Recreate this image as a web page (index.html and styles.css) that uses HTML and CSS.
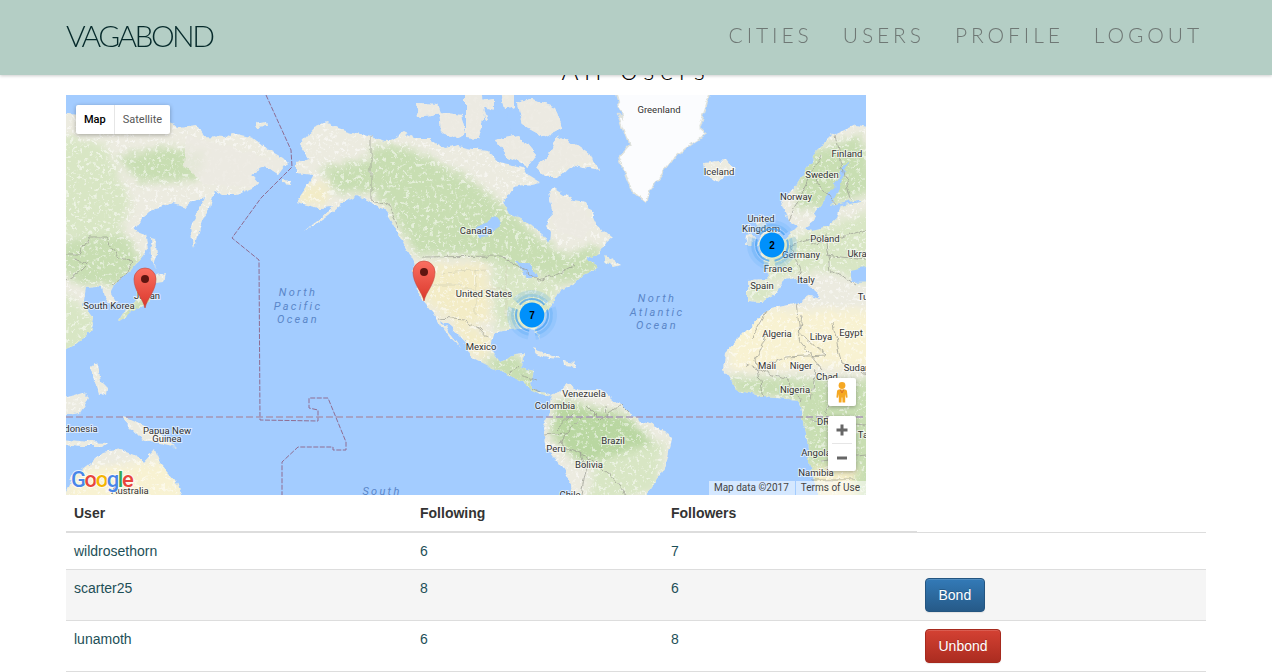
FILE: index.html
```html
<!DOCTYPE html>
<html lang="en">
<head>
<meta charset="utf-8">
<title>Vagabond</title>
<link rel="stylesheet" href="styles.css">
</head>
<body>
<header class="navbar">
  <a class="brand">VAGABOND</a>
  <nav class="nav">
    <a>CITIES</a><a>USERS</a><a>PROFILE</a><a>LOGOUT</a>
  </nav>
</header>
<main class="container">
  <h1 class="title">All Users</h1>
  <div class="map">
    <svg class="map-svg" viewBox="0 0 800 400" width="800" height="400" xmlns="http://www.w3.org/2000/svg">
      <defs>
        <path id="land" d="
        M-10,18 L40,22 103,28 113,32 130,30 138,42 160,43 167,38 187,43 203,55 217,63 222,68 213,80 203,73 197,72 185,80 192,88 187,93 170,100 157,100 148,95 142,100 128,105 120,112 107,108 90,113 78,122 68,135 80,140 83,152 75,163 65,175 57,182 48,190 44,198 50,208 45,211 39,203 37,193 30,192 20,193 17,210 27,223 24,236 14,247 -10,257 Z
        M140,100 L147,93 148,100 145,113 137,123 132,140 128,152 125,133 128,123 Z
        M85,142 L89,143 91,160 88,172 86,160 Z
        M52,227 L66,217 77,212 84,205 87,190 82,186 76,198 66,210 54,220 Z
        M90,180 L100,178 98,186 91,187 Z
        M190,28 L200,26 201,31 191,32 Z M217,85 L224,86 223,89 217,88 Z
        M24,272 L30,268 34,285 41,292 40,300 33,297 28,285 Z
        M-10,305 L8,300 17,297 23,303 14,318 2,320 -10,320 Z
        M56,323 L66,325 82,332 104,347 110,352 94,348 81,347 74,342 64,332 Z
        M-10,343 L20,347 42,348 38,351 15,351 -10,348 Z
        M6,382 L24,368 37,358 56,355 69,360 77,368 89,355 94,368 109,385 119,410 -5,410 Z
        M233,50 L248,33 260,28 280,35 305,42 320,47 337,38 347,43 363,43 377,53 393,50 400,52 420,55 433,67 457,72 462,80 475,88 447,93 437,107 443,118 463,128 478,140 482,148 483,137 480,132 487,120 483,97 488,93 507,105 520,107 530,128 547,143 535,153 520,163 533,172 517,180 507,190 494,195 487,208 481,215 471,232 474,245 469,235 462,233 444,235 431,237 427,240 424,253 434,267 441,265 449,259 459,258 454,272 467,276 464,288 474,297 481,298 487,300 481,302 467,295 457,287 444,280 431,275 417,268 407,263 401,250 385,232 376,225 377,228 396,253 386,243 377,232 372,224 357,205 349,185 347,165 333,140 320,117 303,107 290,100 277,107 263,120 237,137 267,112 253,113 230,107 240,93 247,80 230,78 230,68 242,63 Z
        M350,8 L372,9 375,18 352,22 Z M373,17 L395,20 400,38 385,44 375,35 Z
        M400,-10 L415,-10 418,25 412,45 400,44 Z M415,5 L428,3 428,22 420,28 Z M433,-10 L448,-10 448,12 438,15 Z
        M451,8 L466,4 490,12 497,32 478,42 456,30 Z
        M430,45 L453,40 470,60 462,72 440,62 Z
        M470,72 L482,62 492,40 510,50 527,62 532,76 505,70 492,82 480,82 Z
        M520,150 L530,148 534,160 525,162 Z
        M538,160 L555,170 547,172 540,168 Z
        M467,254 L480,258 494,265 484,264 470,259 Z M497,266 L510,268 508,271 498,270 Z
        M487,300 L501,288 514,295 537,295 562,317 571,323 587,330 604,340 606,345 600,370 584,395 574,410 511,410 507,390 494,370 479,350 477,333 481,323 Z
        M638,68 L660,65 668,75 653,87 640,80 Z
        M715,107 L733,87 750,57 767,40 790,30 810,33 810,222 794,222 767,228 737,222 731,208 745,200 754,203 748,195 734,182 717,185 711,198 694,208 681,207 681,185 703,184 700,172 692,160 702,153 718,146 726,138 732,132 722,125 Z
        M690,128 L697,122 702,135 707,148 690,152 695,142 Z
        M680,140 L688,138 687,150 679,150 Z
        M681,235 L701,215 731,208 737,222 767,228 794,222 810,222 810,410 754,410 751,395 744,372 741,345 737,322 734,305 697,302 671,295 657,275 659,258 Z" />
        <clipPath id="land-clip"><use href="#land"/></clipPath>
        <filter id="soft" x="-20%" y="-20%" width="140%" height="140%"><feGaussianBlur stdDeviation="4"/></filter>
        <filter id="rough" filterUnits="userSpaceOnUse" x="-20" y="-20" width="840" height="440">
          <feTurbulence type="fractalNoise" baseFrequency="0.1" numOctaves="3" seed="4" result="n"/>
          <feDisplacementMap in="SourceGraphic" in2="n" scale="7" xChannelSelector="R" yChannelSelector="G"/>
          <feGaussianBlur stdDeviation="0.4"/>
        </filter>
        <filter id="speckle" filterUnits="userSpaceOnUse" x="0" y="0" width="800" height="400">
          <feTurbulence type="fractalNoise" baseFrequency="0.28" numOctaves="3" seed="11"/>
          <feColorMatrix type="matrix" values="0 0 0 0 1  0 0 0 0 1  0 0 0 0 1  0 0 0 7 -3.9"/>
          <feGaussianBlur stdDeviation="0.5"/>
        </filter>
        <linearGradient id="pin-fill" x1="0" y1="0" x2="0" y2="1">
          <stop offset="0" stop-color="#fa6f61"/><stop offset="1" stop-color="#da382c"/>
        </linearGradient>
        <g id="pin">
          <path class="pin-body" d="M0,29 C-1.8,20 -11,12 -11,0 A11,11 0 1 1 11,0 C11,12 1.8,20 0,29 Z"/>
          <circle class="pin-dot" r="4"/>
        </g>
        <g id="cluster">
          <circle class="arc arc3" r="23" pathLength="100" transform="rotate(100)"/>
          <circle class="arc arc2" r="19.5" pathLength="100" transform="rotate(100)"/>
          <circle class="arc arc1" r="16" pathLength="100" transform="rotate(100)"/>
          <circle class="cluster-ring" r="13"/>
          <circle class="cluster-core" r="12.4"/>
        </g>
      </defs>

      <rect class="water" width="800" height="400"/>
      <g filter="url(#rough)">
        <use href="#land" class="land"/>
        <g clip-path="url(#land-clip)">
          <g filter="url(#soft)">
            <path class="g-mid" d="M305,50 L340,52 400,82 440,112 470,140 500,160 530,150 540,175 500,190 470,178 400,160 350,160 320,110 300,90 Z"/>
            <path class="g-mid" d="M255,72 L305,65 305,98 270,98 Z"/>
            <path class="g-mid" d="M50,62 L100,52 140,58 130,85 75,88 Z"/>
            <path class="g-pale" d="M-10,40 L40,50 65,110 50,145 -10,140 Z"/>
            <path class="g-mid" d="M-5,145 L60,140 75,165 55,190 15,190 -5,175 Z"/>
            <path class="g-pale" d="M-5,195 L30,225 25,260 -10,260 Z"/>
            <path class="g-pale" d="M425,165 L495,190 480,230 430,235 Z"/>
            <path class="g-sand" d="M350,170 L420,168 425,225 395,232 360,205 Z"/>
            <path class="g-sand" d="M232,92 L262,88 262,108 235,108 Z"/>
            <path class="g-sand" d="M385,228 L425,240 420,265 405,258 Z"/>
            <path class="g-mid" d="M415,265 L450,258 470,280 485,300 460,295 430,280 Z"/>
            <path class="g-deep" d="M490,305 L560,320 590,350 560,375 510,365 485,340 Z"/>
            <path class="g-pale" d="M530,365 L600,345 590,395 520,412 Z"/>
            <path class="g-mid" d="M735,60 L795,40 810,95 770,110 730,115 Z"/>
            <path class="g-pale" d="M700,150 L810,115 810,190 760,175 700,185 Z"/>
            <path class="g-pale" d="M680,190 L715,190 700,208 682,208 Z"/>
            <path class="g-sand2" d="M660,215 L810,215 810,272 750,272 665,275 Z"/>
            <path class="g-mid" d="M660,282 L810,285 810,410 745,410 730,305 670,298 Z"/>
            <path class="g-sand" d="M745,372 L790,372 790,410 752,410 Z"/>
            <path class="g-sand2" d="M10,375 L100,365 125,410 -5,410 Z"/>
            <path class="g-mid" d="M50,225 L90,185 95,205 60,235 Z"/>
          </g>
          <rect class="ice" x="0" y="0" width="800" height="400" filter="url(#speckle)"/>
          <path class="arctic" d="M340,0 L545,0 530,62 480,78 420,52 400,50 340,38 Z"/>
          <path class="arctic" d="M483,97 L507,105 530,128 515,145 490,135 Z"/>
          <path class="arctic" d="M120,40 L222,68 190,92 140,90 118,70 Z"/>
        </g>
        <path class="greenland" d="M547,-10 L557,23 552,20 563,50 553,62 567,97 580,107 587,90 607,63 640,38 633,32 647,-10 Z"/>
        <path class="water-shape" d="M738,133 L746,127 750,116 757,106 764,96 773,82 778,72 783,66 782,72 775,86 770,100 766,111 794,104 795,106 775,111 771,123 762,131 746,135 Z"/>
        <path class="water-shape" d="M783,175 L810,170 810,186 785,187 Z"/>
        <path class="water-shape" d="M418,12 L440,18 445,40 425,38 Z"/>
        <path class="water-shape" d="M408,135 L430,120 436,128 416,143 Z"/>
        <path class="water-shape" d="M450,165 L465,170 472,183 460,183 Z"/>
        <path class="water-shape" d="M735,186 L752,198 745,200 735,192 Z"/>
        <g class="border">
          <path d="M357,162 L435,161 450,170 472,185 490,180 508,170"/>
          <path d="M305,42 L305,105 320,108 333,133"/>
          <path d="M374,223 L397,225 414,235 423,245"/>
          <path d="M0,160 L13,160 23,143 40,143 53,163 65,165 60,180 45,190"/>
          <path d="M0,185 L15,175 22,168 10,165"/>
          <path d="M697,302 L690,265 700,240 M701,215 L685,243 M731,208 L735,240 760,260 720,262 700,270 M737,222 L733,245 757,275 M767,228 L775,268 790,272 800,280 M750,275 L745,305 M770,285 L760,320 M680,270 L720,285 735,305 M745,325 L800,330 M755,365 L800,360 M745,385 L790,385"/>
          <path d="M722,125 L755,60 M750,85 L770,110 M770,40 L775,65 785,105 M725,150 L760,140 765,175 M745,150 L800,135 M760,160 L800,165 M725,150 L735,180 M765,175 L790,190"/>
          <path d="M490,335 L508,318 M520,310 L535,325 555,310 562,317 M478,340 L500,338 495,350 515,358 520,375 515,400 M500,338 L515,322 M515,358 L545,380 560,400 M540,312 L542,325"/>
          <path d="M455,280 L470,285 M444,279 L452,270 M466,292 L475,296"/>
        </g>
        <g class="border-faint">
          <path d="M375,178 L420,175 M395,195 L440,195 M410,175 L410,220 M440,170 L440,225 M360,190 L395,190"/>
        </g>
      </g>
      <path class="dateline" d="M200,0 L225,55 226,72 195,103 166,143 193,165 194,325 252,326 252,315 243,313 243,303 262,303 280,347 280,355 267,355 267,352 232,352 216,367 216,400"/>
      <path class="equator" d="M0,322 L800,322"/>

      <g class="labels">
        <text x="593" y="18">Greenland</text><text x="653" y="80">Iceland</text>
        <text x="781" y="62">Finland</text><text x="756" y="83">Sweden</text><text x="730" y="105">Norway</text>
        <text x="695" y="127">United</text><text x="695" y="137">Kingdom</text>
        <text x="759" y="147">Poland</text><text x="791" y="162">Ukra</text>
        <text x="735" y="163">Germany</text><text x="712" y="177">France</text>
        <text x="696" y="194">Spain</text><text x="740" y="188">Italy</text><text x="797" y="205">Tu</text>
        <text x="711" y="242">Algeria</text><text x="755" y="245">Libya</text><text x="785" y="241">Egypt</text>
        <text x="701" y="274">Mali</text><text x="735" y="274">Niger</text><text x="761" y="285">Chad</text>
        <text x="791" y="276">Sudan</text><text x="729" y="298">Nigeria</text><text x="757" y="330">DR</text>
        <text x="797" y="343">Ta</text><text x="750" y="361">Angola</text><text x="750" y="381">Namibia</text>
        <text x="410" y="139">Canada</text><text x="418" y="202">United States</text><text x="415" y="255">Mexico</text>
        <text x="518" y="302">Venezuela</text><text x="489" y="314">Colombia</text><text x="547" y="349">Brazil</text>
        <text x="490" y="357">Peru</text><text x="523" y="373">Bolivia</text><text x="504" y="403">Chile</text>
        <text x="81" y="204">Japan</text><text x="43" y="214">South Korea</text><text x="15" y="337">donesia</text>
        <text x="101" y="339">Papua New</text><text x="101" y="347">Guinea</text><text x="64" y="399">Australia</text>
      </g>
      <g class="ocean">
        <text x="232" y="201">North</text><text x="232" y="215">Pacific</text><text x="232" y="228">Ocean</text>
        <text x="591" y="207">North</text><text x="591" y="221">Atlantic</text><text x="591" y="234">Ocean</text>
        <text x="316" y="400">South</text>
      </g>

      <use href="#pin" x="79" y="184"/>
      <use href="#pin" x="358" y="177"/>
      <use href="#cluster" x="466" y="220"/>
      <text class="cluster-num" x="466" y="223.5">7</text>
      <use href="#cluster" x="706" y="150"/>
      <text class="cluster-num" x="706" y="153.5">2</text>

      <text class="google" x="5" y="392"><tspan class="g-b">G</tspan><tspan class="g-r">o</tspan><tspan class="g-y">o</tspan><tspan class="g-b">g</tspan><tspan class="g-g">l</tspan><tspan class="g-r">e</tspan></text>
    </svg>

    <div class="map-type">
      <span class="map-type-btn is-active">Map</span>
      <span class="map-type-btn">Satellite</span>
    </div>
    <div class="pegman">
      <svg width="28" height="28" viewBox="0 0 28 28" xmlns="http://www.w3.org/2000/svg">
        <circle class="peg" cx="14" cy="7.5" r="3.4"/>
        <path class="peg" d="M11,11.5 L17,11.5 C18.2,11.5 18.8,12.4 19,13.5 L19.6,19.5 L18,19.8 L17.2,16 L17.2,24.5 L14.5,24.5 L14.3,19.5 L13.7,19.5 L13.5,24.5 L10.8,24.5 L10.8,16 L10,19.8 L8.4,19.5 L9,13.5 C9.2,12.4 9.8,11.5 11,11.5 Z"/>
        <path class="peg-mark" d="M12.2,11.5 L14,15 L15.8,11.5"/>
      </svg>
    </div>
    <div class="zoom">
      <span class="zoom-btn">
        <svg width="14" height="14" viewBox="0 0 14 14" xmlns="http://www.w3.org/2000/svg"><path class="zoom-glyph" d="M5.5,1.5 H8.5 V5.5 H12.5 V8.5 H8.5 V12.5 H5.5 V8.5 H1.5 V5.5 H5.5 Z"/></svg>
      </span>
      <span class="zoom-sep"></span>
      <span class="zoom-btn">
        <svg width="14" height="14" viewBox="0 0 14 14" xmlns="http://www.w3.org/2000/svg"><path class="zoom-glyph" d="M2,5.5 H12 V8.5 H2 Z"/></svg>
      </span>
    </div>
    <div class="attrib"><span class="attrib-item">Map data ©2017</span><span class="attrib-item">Terms of Use</span></div>
  </div>

  <table class="users">
    <colgroup><col class="c1"><col class="c2"><col class="c3"><col class="c4"></colgroup>
    <thead>
      <tr><th>User</th><th>Following</th><th>Followers</th></tr>
    </thead>
    <tbody>
      <tr><td>wildrosethorn</td><td>6</td><td>7</td><td></td></tr>
      <tr class="odd"><td>scarter25</td><td>8</td><td>6</td><td><button class="btn btn-primary">Bond</button></td></tr>
      <tr><td>lunamoth</td><td>6</td><td>8</td><td><button class="btn btn-danger">Unbond</button></td></tr>
    </tbody>
  </table>
</main>
</body>
</html>
```

FILE: styles.css
```css
* { box-sizing: border-box; }
html, body { margin: 0; padding: 0; background: #fff; }
body {
  font-family: "Liberation Sans", Arial, sans-serif;
  font-size: 14px;
  line-height: 20px;
  color: #333;
}

.navbar {
  position: fixed;
  top: 0; left: 0; right: 0;
  height: 75px;
  padding: 0 69px 5px 66px;
  display: flex;
  align-items: center;
  justify-content: space-between;
  background: #b4cec5;
  box-shadow: 0 1px 3px rgba(0, 0, 0, .2);
  z-index: 10;
}
.brand {
  font-family: Lato, sans-serif;
  font-weight: 300;
  font-size: 30px;
  letter-spacing: -2.6px;
  color: #062a2b;
}
.nav { display: flex; gap: 30px; }
.nav a {
  font-family: Lato, sans-serif;
  font-weight: 300;
  font-size: 21px;
  letter-spacing: 3.9px;
  color: #6f7875;
}

.container { padding: 0 66px; }
.title {
  margin: 56px 0 11px;
  font-family: Lato, sans-serif;
  font-weight: 300;
  font-size: 26px;
  line-height: 28px;
  letter-spacing: 5.6px;
  text-align: center;
  color: #000;
}

.map { position: relative; width: 800px; height: 400px; overflow: hidden; }
.map-svg { display: block; }
.water { fill: #a3ccff; }
.water-shape { fill: #a3ccff; }
.land { fill: #ecebe0; }
.g-pale { fill: #d8e6c4; }
.g-mid { fill: #c8deb2; }
.g-deep { fill: #b9d7a1; }
.g-sand { fill: #f3ecc6; }
.g-sand2 { fill: #f8f2d2; }
.ice { fill: #fff; opacity: .5; }
.arctic { fill: #eceae2; opacity: .8; }
.greenland { fill: #fbfcfe; stroke: #dfe2dc; stroke-width: 1.5; }
.border path { fill: none; stroke: #9a9b90; stroke-width: .7; }
.border-faint path { fill: none; stroke: #cfcdb2; stroke-width: .6; }
.dateline { fill: none; stroke: #8f6d92; stroke-width: 1; stroke-dasharray: 5 1.5; }
.equator { fill: none; stroke: #a695b4; stroke-width: 1.4; stroke-dasharray: 7 3; }

.labels text {
  font-family: Roboto, sans-serif;
  font-size: 9.5px;
  fill: #333;
  stroke: rgba(255, 255, 255, .6);
  stroke-width: 2px;
  paint-order: stroke;
  text-anchor: middle;
}
.ocean text {
  font-family: Roboto, sans-serif;
  font-style: italic;
  font-size: 11px;
  letter-spacing: 2.3px;
  fill: #5a86c8;
  text-anchor: middle;
}

.pin-body { fill: url(#pin-fill); stroke: #c4443a; stroke-width: .6; }
.pin-dot { fill: #5e1510; }

.arc { fill: none; stroke-dasharray: 28 5.33; }
.arc1 { stroke: #3f9df0; stroke-width: 2; opacity: .7; }
.arc2 { stroke: #4aa6f2; stroke-width: 3; opacity: .4; }
.arc3 { stroke: #62b2f5; stroke-width: 4; opacity: .22; }
.cluster-ring { fill: none; stroke: #e9eec2; stroke-width: .7; opacity: .8; }
.cluster-core { fill: #0090fb; }
.cluster-num {
  font-family: "Liberation Sans", sans-serif;
  font-weight: 700;
  font-size: 10px;
  fill: #000;
  text-anchor: middle;
}

.google {
  font-family: Roboto, sans-serif;
  font-weight: 500;
  font-size: 22px;
  letter-spacing: -1.4px;
  stroke: rgba(255, 255, 255, .7);
  stroke-width: 2px;
  paint-order: stroke;
}
.g-b { fill: #4a86e8; }
.g-r { fill: #e8453c; }
.g-y { fill: #f4b400; }
.g-g { fill: #35a853; }

.map-type {
  position: absolute;
  top: 10px; left: 10px;
  height: 29px;
  display: flex;
  background: #fff;
  border-radius: 2px;
  box-shadow: 0 1px 4px rgba(0, 0, 0, .3);
  font-family: Roboto, sans-serif;
  font-size: 11px;
  line-height: 29px;
}
.map-type-btn { padding: 0 8px; color: #565656; }
.map-type-btn.is-active { color: #000; font-weight: 500; border-right: 1px solid #e6e6e6; }

.pegman {
  position: absolute;
  top: 283px; left: 762px;
  width: 28px; height: 28px;
  background: #fff;
  border-radius: 2px;
  box-shadow: 0 1px 4px rgba(0, 0, 0, .3);
}
.pegman svg { display: block; }
.peg { fill: #f5a823; }
.peg-mark { fill: none; stroke: #d9722a; stroke-width: 1; }

.zoom {
  position: absolute;
  top: 321px; left: 762px;
  width: 28px; height: 55px;
  display: flex;
  flex-direction: column;
  align-items: center;
  background: #fff;
  border-radius: 2px;
  box-shadow: 0 1px 4px rgba(0, 0, 0, .3);
}
.zoom-btn { flex: 1; display: flex; align-items: center; justify-content: center; }
.zoom-sep { width: 20px; height: 1px; background: #e6e6e6; }
.zoom-glyph { fill: #666; }

.attrib {
  position: absolute;
  right: 0; bottom: 0;
  height: 14px;
  display: flex;
  gap: 1px;
  font-family: Roboto, sans-serif;
  font-size: 10px;
  line-height: 14px;
  color: #444;
}
.attrib-item { padding: 0 6px 0 5px; background: rgba(255, 255, 255, .55); }

.users { width: 1140px; border-collapse: collapse; table-layout: fixed; }
.c1 { width: 346px; }
.c2 { width: 251px; }
.c3 { width: 254px; }
.c4 { width: 289px; }
.users th, .users td { padding: 8px; text-align: left; vertical-align: top; }
.users th { font-weight: 700; color: #333; border-bottom: 2px solid #ddd; }
.users td { border-top: 1px solid #ddd; color: #1d4f57; }
.users tbody tr:last-child td { border-bottom: 1px solid #ddd; }
.users .odd td { background: #f5f5f5; }

.btn {
  display: block;
  height: 34px;
  padding: 6px 12.5px;
  border: 1px solid transparent;
  border-radius: 4px;
  font: 14px/20px "Liberation Sans", Arial, sans-serif;
  color: #fff;
  text-shadow: 0 -1px 0 rgba(0, 0, 0, .2);
  box-shadow: inset 0 1px 0 rgba(255, 255, 255, .15), 0 1px 1px rgba(0, 0, 0, .075);
}
.btn-primary { background: linear-gradient(#337ab7, #265a88); border-color: #245580; }
.btn-danger { background: linear-gradient(#d44133, #ab2c20); border-color: #a62a1e; }
```
